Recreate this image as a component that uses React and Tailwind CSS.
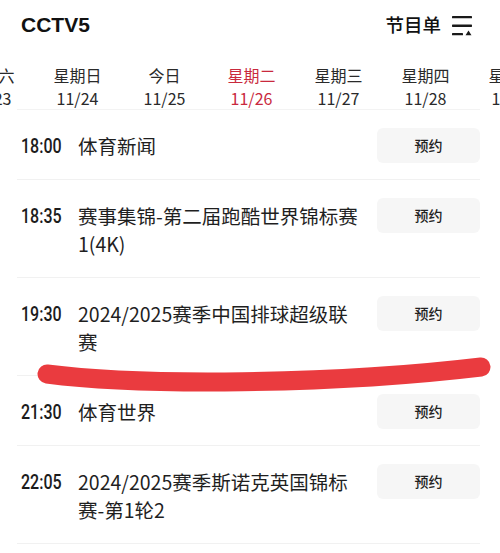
import React from 'react'

const days = [
  { week: '星期六', date: '11/23' },
  { week: '星期日', date: '11/24' },
  { week: '今日', date: '11/25' },
  { week: '星期二', date: '11/26', active: true },
  { week: '星期三', date: '11/27' },
  { week: '星期四', date: '11/28' },
  { week: '星期五', date: '11/29' },
]

const programs = [
  { time: '18:00', title: '体育新闻' },
  { time: '18:35', title: '赛事集锦-第二届跑酷世界锦标赛1(4K)' },
  { time: '19:30', title: '2024/2025赛季中国排球超级联赛' },
  { time: '21:30', title: '体育世界' },
  { time: '22:05', title: '2024/2025赛季斯诺克英国锦标赛-第1轮2' },
]

const cjk = { fontFamily: '"Noto Sans CJK SC", sans-serif' }

function ListIcon() {
  return (
    <svg width="22" height="22" viewBox="0 0 22 22" className="text-[#1a1a1a]">
      <rect x="1" y="2" width="20" height="2.3" rx="0.6" fill="currentColor" />
      <rect x="1" y="10.6" width="20" height="2.3" rx="0.6" fill="currentColor" />
      <rect x="1" y="19" width="11" height="2.3" rx="0.6" fill="currentColor" />
      <path d="M14.5 21.3 L17.5 16.6 L20.5 21.3 Z" fill="currentColor" />
    </svg>
  )
}

function ProgramRow({ time, title }) {
  return (
    <div className="flex items-start border-b border-[#f1f1f1] pt-[18px] pb-[19px]">
      <div className="mt-1 ml-1 w-[57px] shrink-0 leading-7">
        <span
          className="inline-block origin-left scale-x-80 text-[20px] font-medium text-[#1c1c1c]"
          style={{ fontFamily: 'Roboto, sans-serif' }}
        >
          {time}
        </span>
      </div>
      <div className="mt-1 mr-3 flex-1 text-[19.5px] leading-7 text-[#1f1f1f]" style={cjk}>
        {title}
      </div>
      <button
        className="-mb-[3px] h-[35px] w-[103px] shrink-0 rounded-md bg-[#f6f6f6] text-[14px] font-medium text-[#222]"
        style={cjk}
      >
        预约
      </button>
    </div>
  )
}

export default function App() {
  return (
    <div className="relative h-[553px] w-[500px] overflow-hidden bg-white" style={cjk}>
      <div className="flex h-[50px] items-center justify-between pl-[21px] pr-[27px]">
        <div
          className="text-[21px] font-bold text-[#111]"
          style={{ fontFamily: '"Liberation Sans", Arial, sans-serif' }}
        >
          CCTV5
        </div>
        <div className="flex items-center gap-[10px]">
          <span className="text-[18.5px] font-medium text-[#111]">节目单</span>
          <ListIcon />
        </div>
      </div>

      <div className="ml-[-53px] flex pt-[13px]">
        {days.map((d) => (
          <div
            key={d.date}
            className={
              'flex w-[87px] shrink-0 flex-col items-center ' +
              (d.active ? 'text-[#c9293d]' : 'text-[#2a2a2a]')
            }
          >
            <span className="text-[16px] leading-6">{d.week}</span>
            <span className="text-[16px] leading-[22px]">{d.date}</span>
          </div>
        ))}
      </div>

      <div className="pl-[17px] pr-[20px]">
        <div className="border-b border-[#f3f3f3]" />
        {programs.map((p) => (
          <ProgramRow key={p.time} {...p} />
        ))}
      </div>

      <svg
        className="pointer-events-none absolute inset-0"
        width="500"
        height="553"
        viewBox="0 0 500 553"
      >
        <path
          d="M47 374 C 140 386, 330 385, 481 367"
          stroke="#ea3b3f"
          strokeWidth="19"
          strokeLinecap="round"
          fill="none"
        />
      </svg>
    </div>
  )
}
